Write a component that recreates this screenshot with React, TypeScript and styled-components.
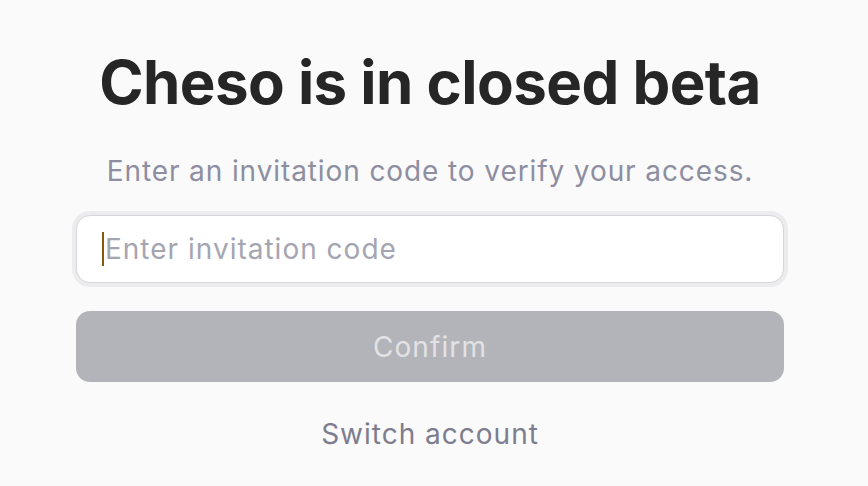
import React from 'react';
import styled, { createGlobalStyle } from 'styled-components';

const GlobalStyle = createGlobalStyle`
  html, body {
    margin: 0;
    padding: 0;
    background: #fafafa;
  }
  body {
    font-family: Inter, "Noto Sans", "Liberation Sans", sans-serif;
    -webkit-font-smoothing: antialiased;
  }
`;

const Page = styled.div`
  width: 868px;
  height: 486px;
  box-sizing: border-box;
  padding: 42px 84px 0 76px;
  background: #fafafa;
`;

const Column = styled.div`
  width: 708px;
  display: flex;
  flex-direction: column;
  align-items: center;
`;

const Title = styled.h1`
  margin: 0;
  font-size: 60px;
  line-height: 80px;
  font-weight: 700;
  letter-spacing: -0.55px;
  color: #262626;
`;

const Subtitle = styled.p`
  margin: 29px 0 0;
  font-size: 28px;
  line-height: 40px;
  font-weight: 400;
  letter-spacing: 0.9px;
  color: #8e8ea1;
`;

const InputWrap = styled.div`
  margin-top: 24px;
  width: 100%;
  box-sizing: border-box;
  height: 68px;
  border: 1.5px solid #d6d6da;
  border-radius: 14px;
  background: #ffffff;
  box-shadow: 0 0 0 4px #ececee;
  display: flex;
  align-items: center;
  padding: 0 26px 0 25px;
  gap: 1px;
`;

const Caret = styled.span`
  width: 2px;
  height: 34px;
  background: #8a5a0a;
  flex: none;
`;

const Input = styled.input`
  flex: 1;
  border: none;
  outline: none;
  background: transparent;
  font-family: inherit;
  font-size: 28px;
  letter-spacing: 1px;
  color: #262626;
  caret-color: transparent;
  padding: 0;

  &::placeholder {
    color: #a5a5b2;
  }
`;

const ConfirmButton = styled.button`
  margin-top: 28px;
  width: 100%;
  height: 71px;
  border: none;
  border-radius: 14px;
  background: #b3b4b9;
  color: #e2e2e5;
  font-family: inherit;
  font-size: 28px;
  letter-spacing: 1.1px;
  cursor: default;
`;

const LinkButton = styled.button`
  margin-top: 32px;
  border: none;
  background: none;
  padding: 0;
  font-family: inherit;
  font-size: 28px;
  line-height: 40px;
  letter-spacing: 1px;
  color: #7d7d8f;
  cursor: pointer;
`;

const App: React.FC = () => {
  return (
    <>
      <GlobalStyle />
      <Page>
        <Column>
          <Title>Cheso is in closed beta</Title>
          <Subtitle>Enter an invitation code to verify your access.</Subtitle>
          <InputWrap>
            <Caret />
            <Input placeholder='Enter invitation code' />
          </InputWrap>
          <ConfirmButton disabled>Confirm</ConfirmButton>
          <LinkButton>Switch account</LinkButton>
        </Column>
      </Page>
    </>
  );
};

export default App;
